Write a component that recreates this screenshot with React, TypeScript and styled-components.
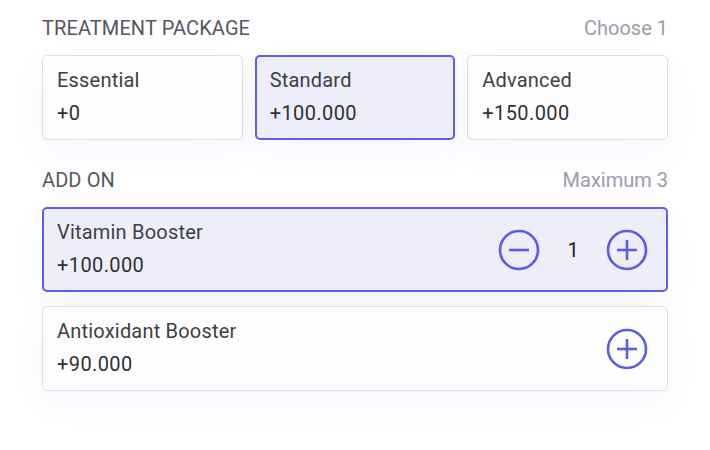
import React, { FC, useState } from 'react';
import styled, { createGlobalStyle } from 'styled-components';

const GlobalStyle = createGlobalStyle`
  html, body {
    margin: 0;
    padding: 0;
    background: #ffffff;
  }
  body {
    font-family: 'Roboto', 'Noto Sans', sans-serif;
  }
`;

const Page = styled.div`
  width: 710px;
  height: 450px;
  overflow: hidden;
  background: #ffffff;
`;

const Panel = styled.div`
  margin: 0 22px;
  padding: 14px 20px 10px;
  display: flex;
  flex-direction: column;
`;

const SectionHead = styled.div<{ $top?: number }>`
  display: flex;
  justify-content: space-between;
  align-items: center;
  margin-top: ${(p) => p.$top ?? 0}px;
  height: 28px;
`;

const Title = styled.span`
  font-size: 20px;
  color: #55575e;
  letter-spacing: 0.1px;
`;

const Hint = styled.span`
  font-size: 20px;
  color: #9c9cad;
`;

const PackageGrid = styled.div`
  display: grid;
  grid-template-columns: repeat(3, 1fr);
  gap: 12px;
  margin-top: 13px;
`;

const Card = styled.div<{ $active?: boolean }>`
  box-sizing: border-box;
  border: ${(p) => (p.$active ? '2px solid #5e5ee9' : '1px solid #dcdde4')};
  background: ${(p) => (p.$active ? '#eeeefa' : '#fefefe')};
  border-radius: 5px;
  padding: ${(p) => (p.$active ? '12px 18px 12px 13px' : '13px 19px 13px 14px')};
  height: 85px;
  display: flex;
  align-items: center;
  cursor: pointer;
  box-shadow: 0 12px 36px rgba(110, 110, 235, 0.07);
`;

const AddOnList = styled.div`
  display: flex;
  flex-direction: column;
  gap: 14px;
  margin-top: 13px;
`;

const Info = styled.div`
  display: flex;
  flex-direction: column;
  gap: 10px;
  flex: 1;
  margin-top: -2px;
`;

const Name = styled.span`
  font-size: 20px;
  color: #3d3f45;
  line-height: 23px;
  letter-spacing: 0.2px;
`;

const Price = styled.span`
  font-size: 20px;
  color: #2e3035;
  line-height: 23px;
  letter-spacing: 0.4px;
`;

const Stepper = styled.div`
  display: flex;
  align-items: center;
  gap: 18px;
`;

const Count = styled.span`
  font-size: 20px;
  color: #222;
  width: 30px;
  text-align: center;
`;

const RoundButton = styled.button`
  border: none;
  background: none;
  padding: 0;
  width: 42px;
  height: 42px;
  display: flex;
  align-items: center;
  justify-content: center;
  cursor: pointer;
`;

const CircleIcon: FC<{ plus?: boolean }> = ({ plus }) => (
  <svg width="42" height="42" viewBox="0 0 42 42" fill="none">
    <circle cx="21" cy="21" r="19" stroke="#5b5be6" strokeWidth="2.6" />
    <line x1="11" y1="21" x2="31" y2="21" stroke="#5b5be6" strokeWidth="2.6" />
    {plus ? <line x1="21" y1="11" x2="21" y2="31" stroke="#5b5be6" strokeWidth="2.6" /> : null}
  </svg>
);

const packages = [
  { name: 'Essential', price: '+0' },
  { name: 'Standard', price: '+100.000' },
  { name: 'Advanced', price: '+150.000' },
];

const addOns = [
  { name: 'Vitamin Booster', price: '+100.000' },
  { name: 'Antioxidant Booster', price: '+90.000' },
];

const App: FC = () => {
  const [selected, setSelected] = useState<string>('Standard');
  const [counts, setCounts] = useState<Record<string, number>>({ 'Vitamin Booster': 1 });

  const change = (name: string, d: number) => {
    setCounts((c) => ({ ...c, [name]: Math.max(0, (c[name] || 0) + d) }));
  };

  return (
    <Page>
      <GlobalStyle />
      <Panel>
        <SectionHead>
          <Title>TREATMENT PACKAGE</Title>
          <Hint>Choose 1</Hint>
        </SectionHead>
        <PackageGrid>
          {packages.map((p) => (
            <Card key={p.name} $active={selected === p.name} onClick={() => setSelected(p.name)}>
              <Info>
                <Name>{p.name}</Name>
                <Price>{p.price}</Price>
              </Info>
            </Card>
          ))}
        </PackageGrid>

        <SectionHead $top={26}>
          <Title>ADD ON</Title>
          <Hint>Maximum 3</Hint>
        </SectionHead>
        <AddOnList>
          {addOns.map((a) => {
            const n = counts[a.name] || 0;
            return (
              <Card key={a.name} $active={n > 0}>
                <Info>
                  <Name>{a.name}</Name>
                  <Price>{a.price}</Price>
                </Info>
                <Stepper>
                  {n > 0 ? (
                    <>
                      <RoundButton onClick={() => change(a.name, -1)}>
                        <CircleIcon />
                      </RoundButton>
                      <Count>{n}</Count>
                    </>
                  ) : null}
                  <RoundButton onClick={() => change(a.name, 1)}>
                    <CircleIcon plus />
                  </RoundButton>
                </Stepper>
              </Card>
            );
          })}
        </AddOnList>
      </Panel>
    </Page>
  );
};

export default App;
